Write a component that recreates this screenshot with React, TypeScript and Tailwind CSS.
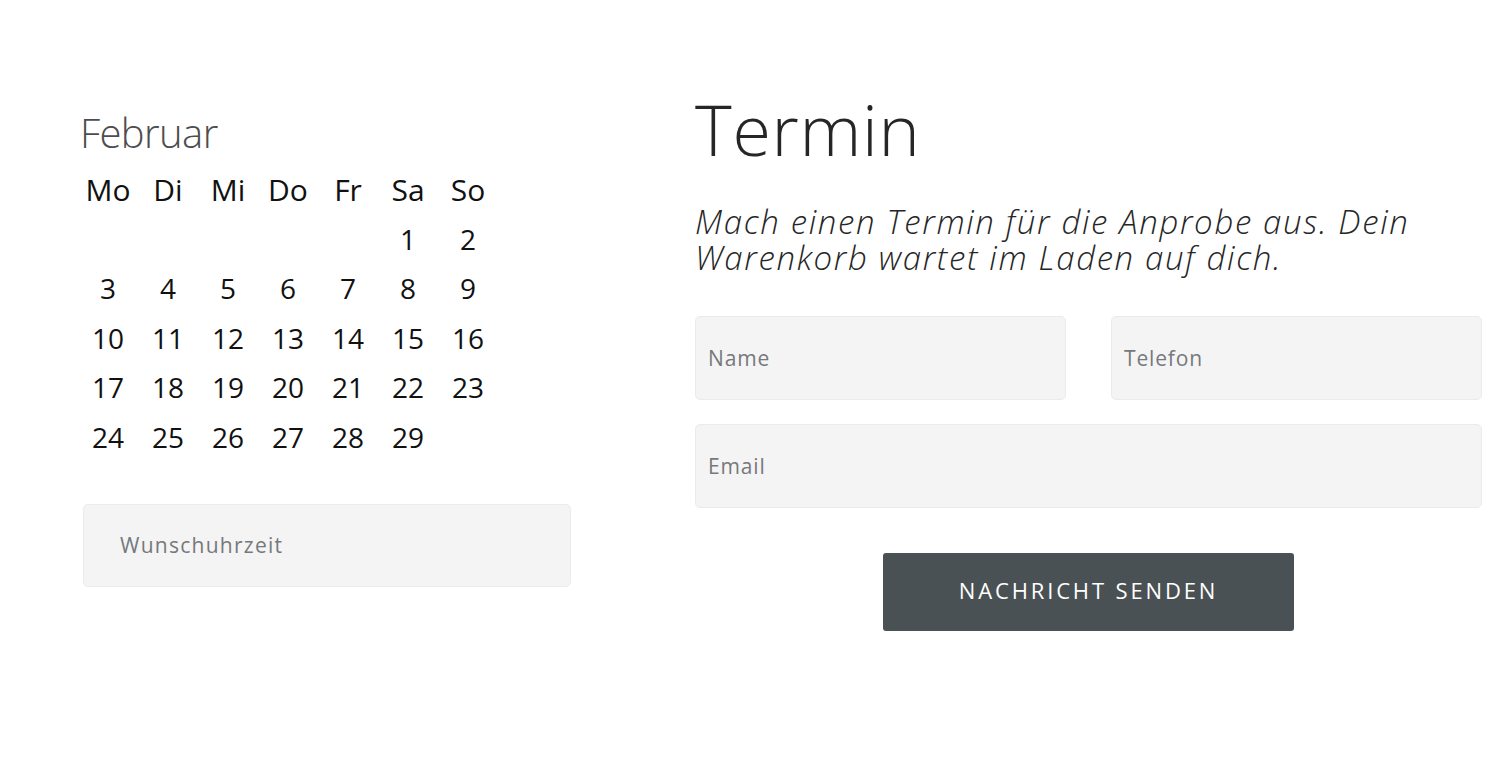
import React from "react";

const days = ["Mo", "Di", "Mi", "Do", "Fr", "Sa", "So"];

// Februar: starts on Saturday, 29 days
const cells: (number | null)[] = [
  ...Array(5).fill(null),
  ...Array.from({ length: 29 }, (_, i) => i + 1),
];

function Calendar() {
  return (
    <div className="flex flex-col">
      <div className="text-[40px] leading-[48px] font-light tracking-[-0.6px] text-[#4d4d4d] pl-[2px]">
        Februar
      </div>
      <div className="mt-[8px] grid grid-cols-[repeat(7,60px)] auto-rows-[49.6px] text-[#111]">
        {days.map((d) => (
          <div key={d} className="text-center text-[30px] leading-[49.6px]">
            {d}
          </div>
        ))}
        {cells.map((n, i) => (
          <div key={i} className="text-center text-[28px] leading-[49.6px]">
            {n ?? ""}
          </div>
        ))}
      </div>
    </div>
  );
}

export default function App() {
  return (
    <div className="min-h-screen bg-white font-['Open_Sans',sans-serif]">
      <div className="flex items-start pt-[95px] pl-[78px]">
        {/* left column */}
        <div className="w-[493px] mt-[14px] flex flex-col">
          <Calendar />
          <input
            type="text"
            placeholder="Wunschuhrzeit"
            className="ml-[5px] mt-[41px] w-[488px] h-[83px] bg-[#f4f4f4] border border-[#ebebeb] rounded-[5px] pl-[36px] text-[21px] tracking-[0.06em] text-[#333] placeholder:text-[#76797c] outline-none"
          />
        </div>

        {/* right column */}
        <div className="ml-[124px] w-[787px] flex flex-col">
          <h1 className="text-[70px] leading-[68px] font-light tracking-[0.01em] text-[#262626]">
            Termin
          </h1>
          <p className="mt-[41px] text-[33px] leading-[36px] italic font-light tracking-[0.05em] text-[#262626]">
            Mach einen Termin für die Anprobe aus. Dein
            <br />
            Warenkorb wartet im Laden auf dich.
          </p>
          <form className="mt-[40px] flex flex-col">
            <div className="grid grid-cols-2 gap-[45px]">
              <input
                type="text"
                placeholder="Name"
                className="h-[84px] bg-[#f4f4f4] border border-[#ebebeb] rounded-[5px] px-[12px] text-[21px] tracking-[0.04em] text-[#333] placeholder:text-[#76797c] outline-none"
              />
              <input
                type="tel"
                placeholder="Telefon"
                className="h-[84px] bg-[#f4f4f4] border border-[#ebebeb] rounded-[5px] px-[12px] text-[21px] tracking-[0.04em] text-[#333] placeholder:text-[#76797c] outline-none"
              />
            </div>
            <input
              type="email"
              placeholder="Email"
              className="mt-[24px] h-[84px] bg-[#f4f4f4] border border-[#ebebeb] rounded-[5px] px-[12px] text-[21px] tracking-[0.04em] text-[#333] placeholder:text-[#76797c] outline-none"
            />
            <div className="mt-[45px] flex justify-center">
              <button
                type="button"
                className="w-[411px] h-[78px] bg-[#4a5154] rounded-[3px] text-white text-[22px] tracking-[0.13em] uppercase pb-[3px]"
              >
                Nachricht senden
              </button>
            </div>
          </form>
        </div>
      </div>
    </div>
  );
}
